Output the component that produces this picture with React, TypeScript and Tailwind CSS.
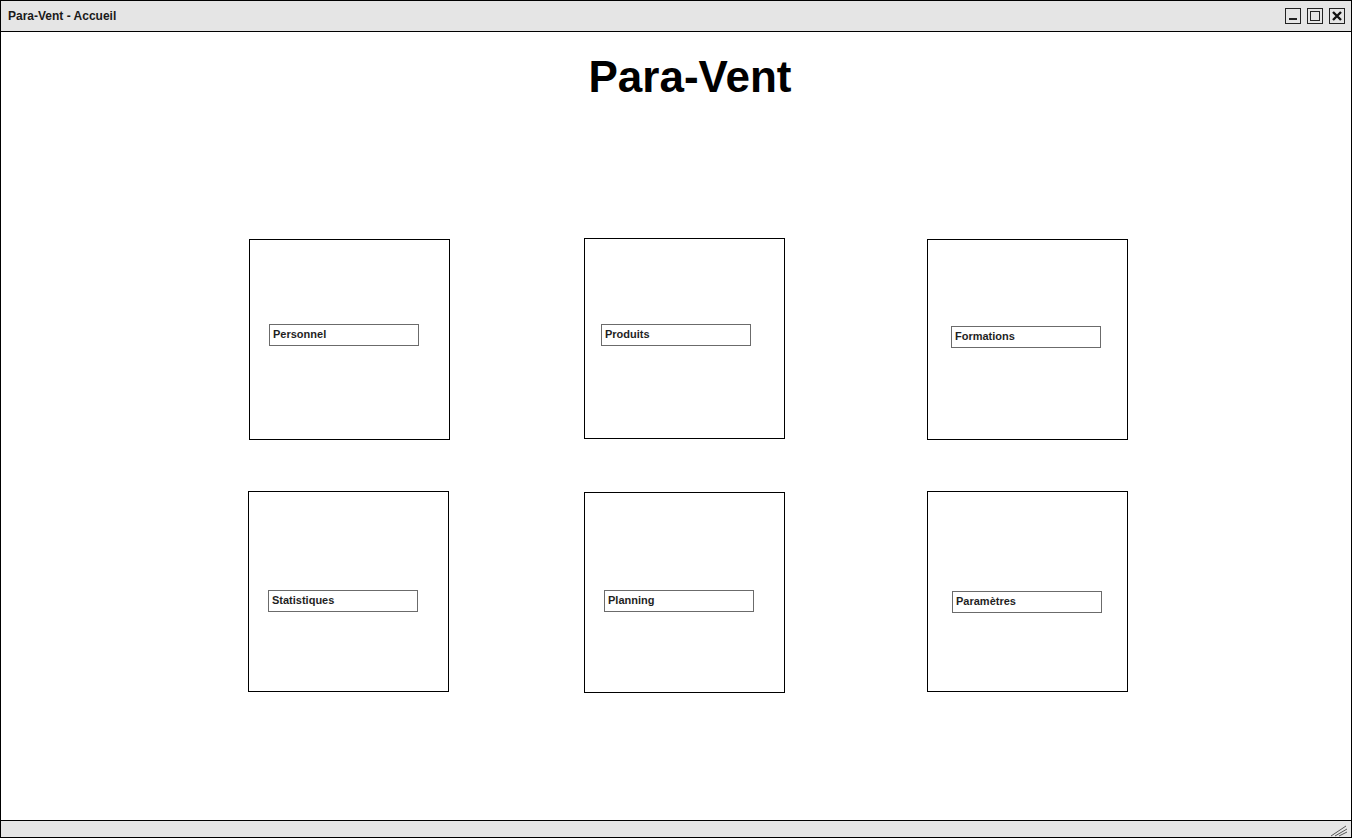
const tiles = [
  [
    { label: "Personnel", box: "ml-[248px] mt-[1px]", field: "ml-[19px] mt-[84px]" },
    { label: "Produits", box: "ml-[134px]", field: "ml-[16px] mt-[85px]" },
    { label: "Formations", box: "ml-[142px] mt-[1px]", field: "ml-[23px] mt-[86px]" },
  ],
  [
    { label: "Statistiques", box: "ml-[247px]", field: "ml-[19px] mt-[98px]" },
    { label: "Planning", box: "ml-[135px] mt-[1px]", field: "ml-[19px] mt-[97px]" },
    { label: "Paramètres", box: "ml-[142px]", field: "ml-[24px] mt-[99px]" },
  ],
];

function WindowButtons() {
  return (
    <div className="flex items-center gap-[6px] mr-[6px]">
      <div className="w-[16px] h-[16px] border border-[#222] relative">
        <div className="absolute left-[3px] right-[3px] bottom-[3px] h-[2px] bg-[#222]" />
      </div>
      <div className="w-[16px] h-[16px] border border-[#222] p-[2px]">
        <div className="w-full h-full border border-[#222]" />
      </div>
      <div className="w-[16px] h-[16px] border border-[#222]">
        <svg viewBox="0 0 14 14" className="w-[14px] h-[14px]">
          <path d="M3 3 L11 11 M11 3 L3 11" stroke="#111" strokeWidth="2.4" />
        </svg>
      </div>
    </div>
  );
}

export default function App() {
  return (
    <div
      className="w-[1352px] h-[838px] border border-black bg-white flex flex-col text-[#111]"
      style={{ fontFamily: '"Liberation Sans", Arial, sans-serif' }}
    >
      <header className="h-[31px] shrink-0 bg-[#e5e5e5] border-b border-black flex items-center justify-between">
        <span className="ml-[7px] text-[12px] font-bold text-[#1a1a1a]">Para-Vent - Accueil</span>
        <WindowButtons />
      </header>

      <main className="flex-1 min-h-0">
        <h1 className="mt-[20px] pl-[28px] text-center text-[44px] leading-[50px] font-bold text-black">Para-Vent</h1>

        <div className="mt-[136px]">
          {tiles.map((row, i) => (
            <div key={i} className={i === 0 ? "flex items-start" : "flex items-start mt-[51px]"}>
              {row.map((t) => (
                <div key={t.label} className={`w-[201px] h-[201px] border border-black shrink-0 ${t.box}`}>
                  <div
                    className={`w-[150px] h-[22px] border border-[#6b6b6b] px-[3px] text-[11px] leading-[19px] font-bold text-[#1f1f1f] ${t.field}`}
                  >
                    {t.label}
                  </div>
                </div>
              ))}
            </div>
          ))}
        </div>
      </main>

      <footer className="h-[17px] shrink-0 bg-[#e5e5e5] border-t border-black flex justify-end items-end">
        <svg viewBox="0 0 20 14" className="w-[20px] h-[14px] mr-[2px]">
          <path d="M2 13 L17 3 M6 13 L18 6 M10 13 L18 9" stroke="#555" strokeWidth="1" />
        </svg>
      </footer>
    </div>
  );
}
